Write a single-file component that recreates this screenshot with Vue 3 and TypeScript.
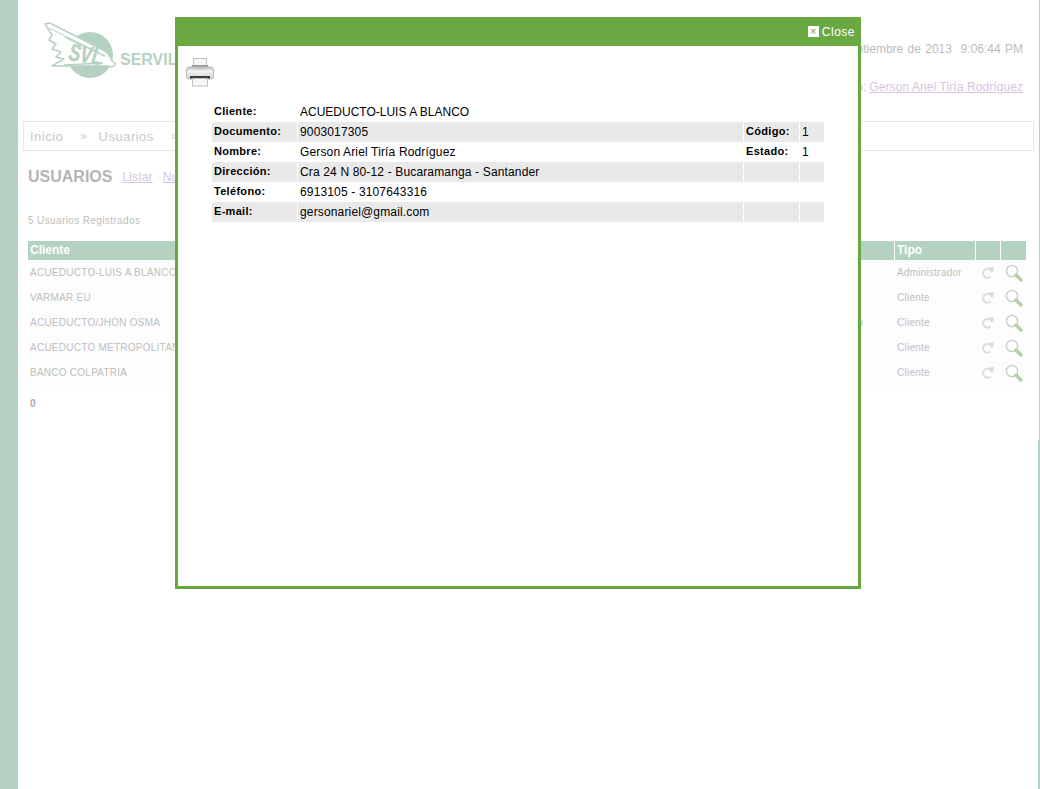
<script setup lang="ts">
interface UserRow {
  cliente: string;
  correo: string;
  tipo: string;
}

const users: UserRow[] = [
  { cliente: "ACUEDUCTO-LUIS A BLANCO", correo: "", tipo: "Administrador" },
  { cliente: "VARMAR EU", correo: "", tipo: "Cliente" },
  { cliente: "ACUEDUCTO/JHON OSMA", correo: "n", tipo: "Cliente" },
  { cliente: "ACUEDUCTO METROPOLITANO", correo: "", tipo: "Cliente" },
  { cliente: "BANCO COLPATRIA", correo: "", tipo: "Cliente" },
];

const details = [
  { label: "Cliente:", value: "ACUEDUCTO-LUIS A BLANCO", label2: "", value2: "" },
  { label: "Documento:", value: "9003017305", label2: "Código:", value2: "1" },
  { label: "Nombre:", value: "Gerson Ariel Tiría Rodríguez", label2: "Estado:", value2: "1" },
  { label: "Dirección:", value: "Cra 24 N 80-12 - Bucaramanga - Santander", label2: "", value2: "" },
  { label: "Teléfono:", value: "6913105 - 3107643316", label2: "", value2: "" },
  { label: "E-mail:", value: "gersonariel@gmail.com", label2: "", value2: "" },
];
</script>

<template>
  <div class="page">
    <header class="top">
      <div class="brand">
        <svg class="logo" width="77" height="60" viewBox="0 0 77 60">
          <circle cx="47" cy="33" r="23" fill="#b5d2c1" />
          <path
            d="M2 2 L7 1 L60 28 Q67 32 69 39 L73 42 L69 45 L64 44 L9 44 L21 37 L13 35 L18 30 L9 27 L13 22 L6 18 L9 13 Z"
            fill="#fff"
            stroke="#b5d2c1"
            stroke-width="1.5"
            stroke-linejoin="round"
          />
          <path d="M6 6 L56 31" stroke="#b5d2c1" stroke-width="1" fill="none" />
          <path d="M22 15 L62 34" stroke="#b5d2c1" stroke-width="1.5" fill="none" />
          <path d="M21 43 L60 41" stroke="#b5d2c1" stroke-width="1.5" fill="none" />
          <text class="logo-text" transform="translate(25 38) rotate(9) scale(0.82 1.15)">SVL</text>
        </svg>
        <span class="brand-name">SERVILLANTAS</span>
      </div>
      <div class="session">
        <div class="date">Septiembre de 2013 &nbsp;9:06:44 PM</div>
        <div class="user">Usuario: <a href="#">Gerson Ariel Tiría Rodríguez</a></div>
      </div>
    </header>

    <nav class="crumbs">
      <span>Inicio</span><i>»</i><span>Usuarios</span><i>»</i>
    </nav>

    <div class="title-row">
      <h1>USUARIOS</h1>
      <a href="#">Listar</a>
      <a href="#" class="new">Nuevo</a>
    </div>

    <p class="count">5 Usuarios Registrados</p>

    <div class="grid">
      <div class="grid-row head">
        <div class="c-main">Cliente</div>
        <div class="c-type">Tipo</div>
        <div class="c-act"></div>
        <div class="c-act"></div>
      </div>
      <div v-for="u in users" :key="u.cliente" class="grid-row body">
        <div class="c-main">
          <span>{{ u.cliente }}</span>
          <span>{{ u.correo }}</span>
        </div>
        <div class="c-type">{{ u.tipo }}</div>
        <div class="c-act">
          <svg width="14" height="14" viewBox="0 0 14 14" fill="none">
            <path d="M11 6.5 A4.5 4.5 0 1 0 9.6 10.6" stroke="#dadedc" stroke-width="2" />
            <path d="M7.5 1.5 L13 1 L12.5 6.5 Z" fill="#dadedc" />
          </svg>
        </div>
        <div class="c-act">
          <svg width="18" height="18" viewBox="0 0 18 18" fill="none">
            <circle cx="7" cy="7" r="5.6" fill="#fff" stroke="#c4d0c4" stroke-width="1.4" />
            <path d="M11 11 L16 16" stroke="#b4d0a8" stroke-width="3.4" stroke-linecap="round" />
          </svg>
        </div>
      </div>
    </div>

    <p class="pager">0</p>
  </div>

  <section class="modal">
    <div class="modal-bar">
      <span class="close"><b>×</b>Close</span>
    </div>
    <div class="modal-body">
      <svg class="printer" width="28" height="30" viewBox="0 0 28 30">
        <defs>
          <linearGradient id="printer-body" x1="0" y1="0" x2="0" y2="1">
            <stop offset="0" stop-color="#b9bcbf" />
            <stop offset="0.35" stop-color="#f1f2f3" />
            <stop offset="1" stop-color="#cfd1d3" />
          </linearGradient>
        </defs>
        <rect x="7.5" y="1.5" width="13" height="9" fill="#f7f7f7" stroke="#c4c4c4" />
        <rect x="6" y="8" width="16" height="2" fill="#9a9a9a" />
        <path d="M3.5 10 H24.5 Q27.5 10 27.5 13 V20 Q27.5 22 25 22 H3 Q0.5 22 0.5 20 V13 Q0.5 10 3.5 10 Z" fill="url(#printer-body)" stroke="#b5b7b9" />
        <rect x="4" y="19" width="20" height="2.5" fill="#3a3a3a" />
        <rect x="6.5" y="21.5" width="15" height="7.5" fill="#f6f6f6" stroke="#c2c2c2" />
      </svg>
      <div class="detail">
        <div v-for="(d, i) in details" :key="d.label" class="detail-row" :class="{ odd: i % 2 === 1 }">
          <div class="lbl">{{ d.label }}</div>
          <div class="val">{{ d.value }}</div>
          <template v-if="i > 0">
            <div class="lbl">{{ d.label2 }}</div>
            <div class="val">{{ d.value2 }}</div>
          </template>
        </div>
      </div>
    </div>
  </section>
</template>

<style scoped>
.page {
  position: relative;
  margin-left: 18px;
  border-right: 1px solid #b5d1c1;
  min-height: 789px;
  background: #fff;
  box-sizing: border-box;
  overflow: hidden;
  color: #bdbdbd;
}
.page::after {
  content: "";
  position: absolute;
  right: 0;
  top: 440px;
  bottom: 0;
  width: 1px;
  background: #b5d1c1;
}
.top {
  height: 121px;
  display: flex;
  justify-content: space-between;
  padding: 22px 16px 0 25px;
  box-sizing: border-box;
}
.brand {
  display: flex;
  align-items: flex-start;
}
.logo {
  display: block;
}
.logo-text {
  font: italic bold 21px "Liberation Sans", Arial, sans-serif;
  fill: #b5d2c1;
  stroke: #b5d2c1;
  stroke-width: 0.4px;
}
.brand-name {
  font: bold 16px "Liberation Sans", Arial, sans-serif;
  color: #b5d2c1;
  margin-top: 29px;
}
.session {
  text-align: right;
  font: 12px "Liberation Sans", Arial, sans-serif;
  padding-top: 20px;
}
.date {
  word-spacing: 1px;
}
.user {
  margin-top: 24px;
}
.user a {
  color: #d6c4de;
  letter-spacing: 0.08px;
}
.crumbs {
  margin: 0 5px;
  height: 30px;
  box-sizing: border-box;
  border: 1px solid #e8e8e8;
  display: flex;
  align-items: center;
  padding-left: 6px;
  font: 13px "Liberation Sans", Arial, sans-serif;
  letter-spacing: 0.5px;
  color: #c8c8c8;
}
.crumbs i {
  font-style: normal;
  margin: 0 11px 0 17px;
  font-size: 12px;
  color: #d2d2d2;
}
.title-row {
  display: flex;
  align-items: center;
  margin: 16px 0 0 10px;
  height: 20px;
  font: 12px "Liberation Sans", Arial, sans-serif;
  letter-spacing: 0.15px;
}
.title-row h1 {
  margin: 0 10px 0 0;
  font: bold 16px "Liberation Sans", Arial, sans-serif;
  letter-spacing: 0;
  color: #b4b4b4;
}
.title-row a {
  color: #d5c5e0;
  margin-right: 10px;
}
.title-row a.new {
  color: #c9c5ea;
}
.count {
  margin: 27px 0 0 10px;
  height: 14px;
  font: 10px/14px "Liberation Sans", Arial, sans-serif;
  letter-spacing: 0.38px;
}
.grid {
  margin: 13px 0 0 10px;
  width: 998px;
  font-family: "Liberation Sans", Arial, sans-serif;
}
.grid-row {
  display: grid;
  grid-template-columns: 866px 80px 24px 25px;
  column-gap: 1px;
}
.head {
  height: 19px;
  margin-bottom: 1px;
  font: bold 12px/19px "Liberation Sans", Arial, sans-serif;
  color: #fff;
}
.head > div {
  background: #b5d1bf;
  padding-left: 2px;
}
.body {
  height: 24px;
  margin-bottom: 1px;
  font-size: 10px;
  line-height: 24px;
  letter-spacing: 0.25px;
  color: #bdbdbd;
}
.body > div {
  background: #fdfdfd;
  padding-left: 2px;
}
.c-main {
  display: flex;
  justify-content: space-between;
}
.body .c-main {
  padding-right: 31px;
}
.body .c-act {
  display: flex;
  align-items: center;
  justify-content: center;
  padding: 0;
}
.pager {
  margin: 13px 0 0 12px;
  font: bold 10px "Liberation Sans", Arial, sans-serif;
  color: #aaa;
}
.modal {
  position: absolute;
  left: 175px;
  top: 17px;
  width: 686px;
  height: 572px;
  box-sizing: border-box;
  border: 3px solid #6aa842;
  border-top: 0;
  background: #fff;
  display: flex;
  flex-direction: column;
}
.modal-bar {
  height: 29px;
  background: #6aa842;
  margin: 0 -3px;
  display: flex;
  justify-content: flex-end;
  align-items: center;
  padding: 0 6px 0 0;
  font: 12px "Liberation Sans", Arial, sans-serif;
  letter-spacing: 0.5px;
  color: #fff;
}
.close {
  display: flex;
  align-items: center;
}
.close b {
  width: 11px;
  height: 11px;
  background: #fff;
  color: #6aa842;
  font: 11px/10px "Liberation Sans", Arial, sans-serif;
  letter-spacing: 0;
  text-align: center;
  margin-right: 3px;
}
.modal-body {
  padding: 11px 0 0 8px;
  font-family: "Liberation Sans", Arial, sans-serif;
}
.printer {
  display: block;
}
.detail {
  margin: 15px 0 0 26px;
  width: 612px;
}
.detail-row {
  display: grid;
  grid-template-columns: 85px 445px 55px 24px;
  column-gap: 1px;
  height: 19px;
  margin-bottom: 1px;
  line-height: 20px;
  color: #000;
}
.detail-row.odd > div {
  background: #e9e9e9;
}
.lbl {
  padding-left: 2px;
  font-weight: bold;
  font-size: 11px;
  letter-spacing: 0.3px;
  line-height: 18px;
}
.val {
  padding-left: 2px;
  font-size: 12px;
  letter-spacing: 0.15px;
}
.detail-row:first-child .val {
  letter-spacing: 0;
}
</style>

<style>
body {
  background: #b5d1c1;
}
</style>
